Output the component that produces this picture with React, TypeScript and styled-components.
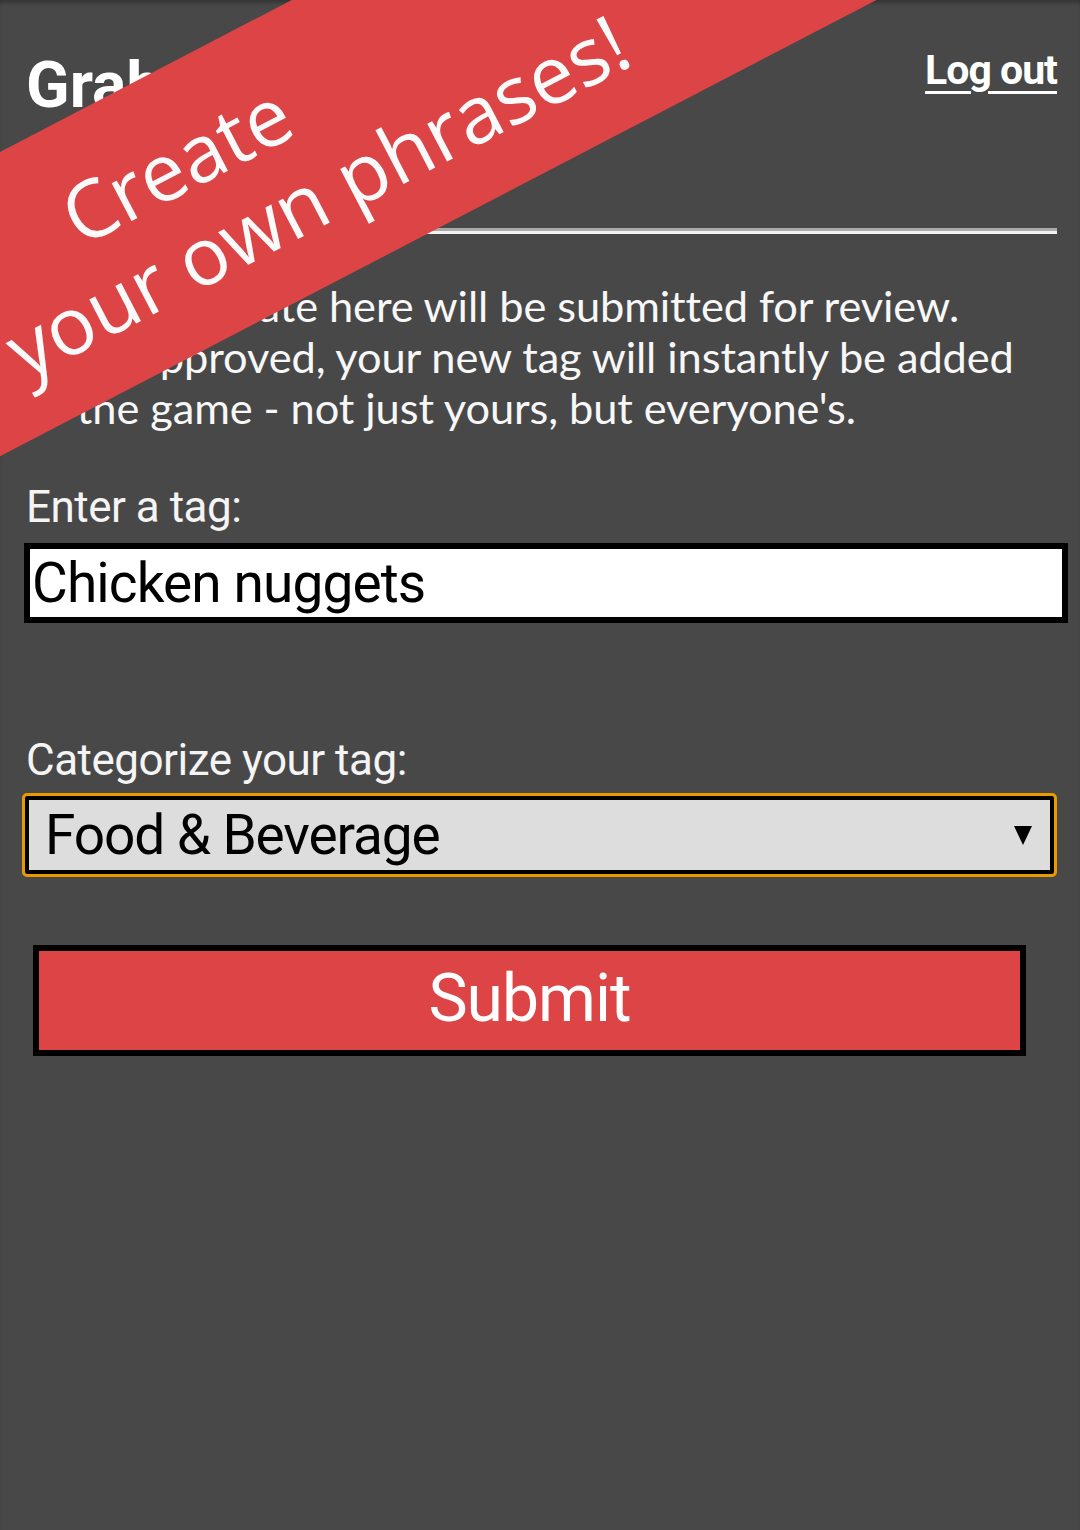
import React from "react";
import styled, { createGlobalStyle } from "styled-components";

const Global = createGlobalStyle`
  html, body { margin: 0; padding: 0; background: #484848; }
  body { font-family: "Liberation Sans", Arial, sans-serif; }
  * { box-sizing: border-box; }
`;

const Screen = styled.div`
  position: relative;
  width: 1080px;
  min-height: 1530px;
  overflow: hidden;
  background: #484848;
  box-shadow: inset 0 4px 5px -2px rgba(0, 0, 0, 0.35);
`;

const Content = styled.main`
  padding: 0 23px 0 24px;
  display: flex;
  flex-direction: column;
`;

const Header = styled.header`
  display: flex;
  justify-content: space-between;
  align-items: flex-start;
  padding-top: 50px;
`;

const Title = styled.h1`
  margin: 4px 0 0 2px;
  font-family: "Liberation Sans Narrow", "Roboto", sans-serif;
  font-weight: 700;
  font-size: 64px;
  line-height: 64px;
  color: #ffffff;
`;

const LogOut = styled.a`
  font-family: "Roboto", sans-serif;
  font-weight: 700;
  font-size: 41px;
  line-height: 41px;
  color: #ffffff;
  text-decoration: underline;
  text-decoration-thickness: 3px;
  text-underline-offset: 7px;
  letter-spacing: -1px;
  cursor: pointer;
`;

const Rule = styled.hr`
  margin: 110px 0 0 0;
  height: 0;
  border: none;
  border-top: 3px solid #a9a9a9;
  border-bottom: 3px solid #f2f2f2;
`;

const Intro = styled.p`
  margin: 46px 0 0 2px;
  font-family: "Lato", sans-serif;
  font-size: 43.4px;
  line-height: 51px;
  letter-spacing: -0.1px;
  color: #f7f7f7;
`;

const Label = styled.label<{ $top: number }>`
  display: block;
  margin: ${(p) => p.$top}px 0 9px 2px;
  font-family: "Roboto", sans-serif;
  font-size: 44px;
  line-height: 54px;
  letter-spacing: -0.5px;
  color: #f4f4f4;
`;

const TagInput = styled.input`
  display: block;
  width: calc(100% + 11px);
  height: 80px;
  margin: 0;
  padding: 0 2px;
  border: 6px solid #000000;
  background: #ffffff;
  font-family: "Roboto", sans-serif;
  font-size: 55px;
  letter-spacing: -0.9px;
  color: #000000;
  outline: none;
`;

const SelectBox = styled.div`
  display: flex;
  align-items: center;
  justify-content: space-between;
  width: 1029px;
  height: 78px;
  margin-left: 1px;
  padding: 0 18px 0 16px;
  border: 4px solid #000000;
  background: #dddddd;
  outline: 3px solid #e89a00;
  border-radius: 2px;
  font-family: "Roboto", sans-serif;
  font-size: 55px;
  letter-spacing: -1.1px;
  color: #000000;
`;

const SubmitButton = styled.button`
  display: block;
  width: 993px;
  height: 111px;
  margin: 71px 0 0 9px;
  padding: 0 0 4px 0;
  border: 6px solid #000000;
  background: #dd4446;
  font-family: "Roboto", sans-serif;
  font-size: 66px;
  letter-spacing: -1px;
  color: #ffffff;
  cursor: pointer;
`;

const Stripe = styled.div`
  position: absolute;
  left: -200px;
  top: 256px;
  width: 1600px;
  height: 270px;
  transform-origin: 0 0;
  transform: rotate(-27.5deg);
  background: #dd4446;
  padding-top: 44px;
  pointer-events: none;
`;

const StripeLine = styled.div<{ $indent: number }>`
  padding-left: ${(p) => p.$indent}px;
  font-family: "Open Sans", sans-serif;
  font-size: 80px;
  line-height: 93px;
  color: #fafafa;
  white-space: nowrap;
`;

export default function App() {
  return (
    <Screen>
      <Global />
      <Content>
        <Header>
          <Title>Grab Tag</Title>
          <LogOut>Log out</LogOut>
        </Header>
        <Rule />
        <Intro>
          Tags you create here will be submitted for review. Once approved, your new tag will instantly be added
          to the game - not just yours, but everyone's.
        </Intro>
        <Label $top={47}>Enter a tag:</Label>
        <TagInput defaultValue="Chicken nuggets" />
        <Label $top={110}>Categorize your tag:</Label>
        <SelectBox>
          <span>Food &amp; Beverage</span>
          <svg width="18" height="19" viewBox="0 0 18 19" aria-hidden>
            <path d="M0 0 H18 L9 19 Z" fill="#000" />
          </svg>
        </SelectBox>
        <SubmitButton>Submit</SubmitButton>
      </Content>
      <Stripe>
        <StripeLine $indent={253}>Create</StripeLine>
        <StripeLine $indent={142}>your own phrases!</StripeLine>
      </Stripe>
    </Screen>
  );
}
